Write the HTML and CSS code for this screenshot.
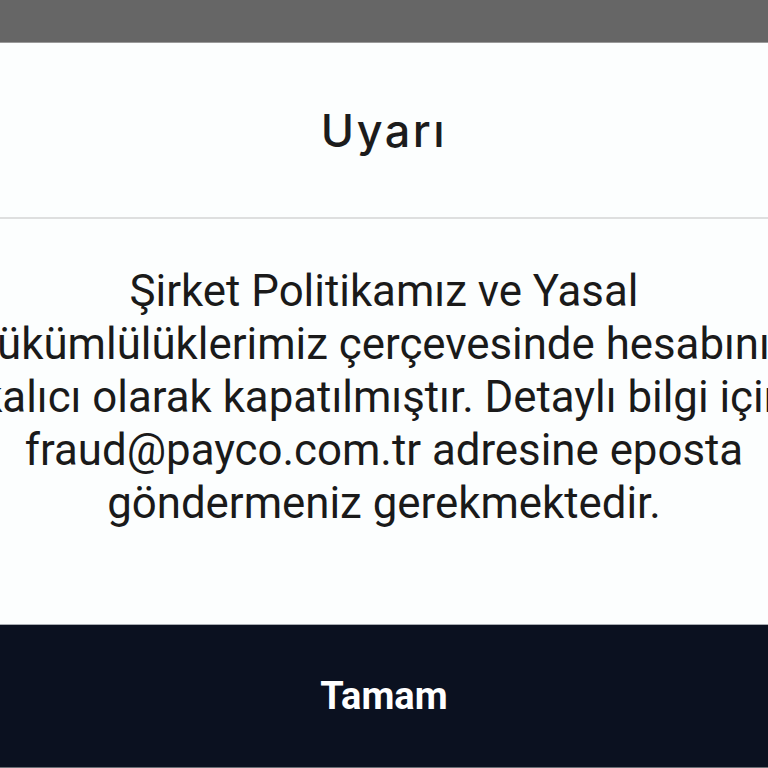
FILE: index.html
```html
<!DOCTYPE html>
<html lang="tr">
<head>
<meta charset="utf-8">
<link rel="stylesheet" href="styles.css">
</head>
<body>
<div class="screen">
  <div class="topbar"></div>
  <div class="dialog">
    <div class="header"><h1 class="title">Uyarı</h1></div>
    <div class="divider"></div>
    <div class="content">
      <p class="message"><span>Şirket Politikamız ve Yasal</span><span>yükümlülüklerimiz çerçevesinde hesabınız</span><span>kalıcı olarak kapatılmıştır. Detaylı bilgi için</span><span>fraud@payco.com.tr adresine eposta</span><span>göndermeniz gerekmektedir.</span></p>
    </div>
    <div class="button">Tamam</div>
  </div>
</div>
</body>
</html>
```
FILE: styles.css
```css
html, body {
  margin: 0;
  padding: 0;
  width: 768px;
  height: 768px;
  overflow: hidden;
  background: #fcfefe;
}
.screen {
  display: flex;
  flex-direction: column;
  width: 768px;
  height: 768px;
  overflow: hidden;
}
.topbar {
  height: 42px;
  background: #666666;
  border-bottom: 1px solid #9a9a9a;
  flex: none;
}
.dialog {
  flex: 1;
  display: flex;
  flex-direction: column;
  background: #fcfefe;
  min-width: 0;
}
.header {
  height: 174px;
  display: flex;
  align-items: center;
  justify-content: center;
  flex: none;
}
.title {
  margin: 0;
  font-family: Inter, "Noto Sans", sans-serif;
  font-weight: 500;
  font-size: 45px;
  letter-spacing: 2.5px;
  color: #1c1c1c;
  line-height: 1;
}
.divider {
  height: 2px;
  background: #dedfdf;
  flex: none;
}
.content {
  flex: 1;
  display: flex;
  justify-content: center;
  padding-top: 46px;
  min-width: 0;
}
.message {
  margin: 0;
  display: flex;
  flex-direction: column;
  align-items: center;
  font-family: Roboto, "Noto Sans", sans-serif;
  font-size: 43.8px;
  line-height: 53px;
  color: #1a1a1a;
  white-space: nowrap;
}
.button {
  height: 142px;
  flex: none;
  background: #0b1120;
  border-top: 1px solid #a9adb3;
  border-bottom: 1px solid #6b6f75;
  display: flex;
  align-items: center;
  justify-content: center;
  color: #ffffff;
  font-family: Roboto, "Noto Sans", sans-serif;
  font-weight: 700;
  font-size: 38px;
}
```
